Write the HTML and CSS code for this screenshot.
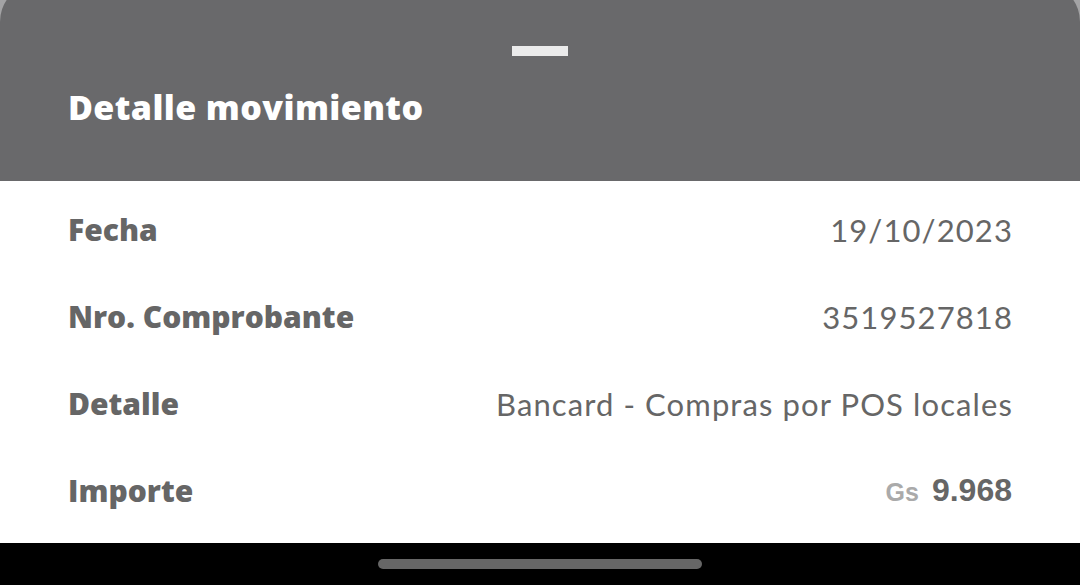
FILE: index.html
```html
<!DOCTYPE html>
<html lang="es">
<head>
<meta charset="utf-8">
<link rel="stylesheet" href="styles.css">
</head>
<body>
<div class="screen">
  <header class="sheet-head">
    <div class="handle"></div>
    <h1 class="title">Detalle movimiento</h1>
  </header>
  <main class="sheet-body">
    <div class="row">
      <span class="label">Fecha</span>
      <span class="value">19/10/2023</span>
    </div>
    <div class="row">
      <span class="label">Nro. Comprobante</span>
      <span class="value">3519527818</span>
    </div>
    <div class="row">
      <span class="label">Detalle</span>
      <span class="value">Bancard - Compras por POS locales</span>
    </div>
    <div class="row">
      <span class="label">Importe</span>
      <span class="amount"><span class="currency">Gs</span><span class="number">9.968</span></span>
    </div>
  </main>
  <footer class="navbar">
    <div class="home-indicator"></div>
  </footer>
</div>
</body>
</html>
```
FILE: styles.css
```css
html, body {
  margin: 0;
  padding: 0;
}
body {
  width: 1080px;
  height: 585px;
  overflow: hidden;
  background: #a3a3a5;
}
.screen {
  display: flex;
  flex-direction: column;
  height: 585px;
}
.sheet-head {
  background: #69696b;
  height: 181px;
  border-radius: 28px 28px 0 0 / 34px 34px 0 0;
  margin-top: -12px;
  padding-top: 12px;
  box-sizing: content-box;
  display: flex;
  flex-direction: column;
  align-items: center;
}
.handle {
  width: 56px;
  height: 10px;
  background: #ebebeb;
  margin-top: 46px;
}
.title {
  align-self: flex-start;
  margin: 31px 0 0 68px;
  font-family: "Open Sans", sans-serif;
  font-weight: 800;
  font-size: 34px;
  line-height: 40px;
  color: #ffffff;
  letter-spacing: 0.4px;
}
.sheet-body {
  flex: 1;
  background: #ffffff;
  padding: 5px 68px 0;
  display: flex;
  flex-direction: column;
}
.row {
  display: flex;
  justify-content: space-between;
  align-items: center;
  height: 87px;
}
.label {
  font-family: "Open Sans", sans-serif;
  font-weight: 800;
  font-size: 30px;
  color: #666666;
}
.value {
  font-family: Lato, sans-serif;
  font-weight: 400;
  font-size: 31px;
  letter-spacing: 1.1px;
  margin-right: -1px;
  color: #666666;
}
.amount {
  display: flex;
  align-items: baseline;
  gap: 13px;
  font-family: "Liberation Sans", Arial, sans-serif;
  font-weight: 700;
}
.currency {
  font-size: 25px;
  color: #aaaaaa;
}
.number {
  font-size: 32px;
  color: #666666;
}
.navbar {
  height: 42px;
  background: #000000;
  display: flex;
  justify-content: center;
  align-items: flex-start;
}
.home-indicator {
  width: 324px;
  height: 10px;
  border-radius: 5px;
  background: #666666;
  margin-top: 16px;
}
```
